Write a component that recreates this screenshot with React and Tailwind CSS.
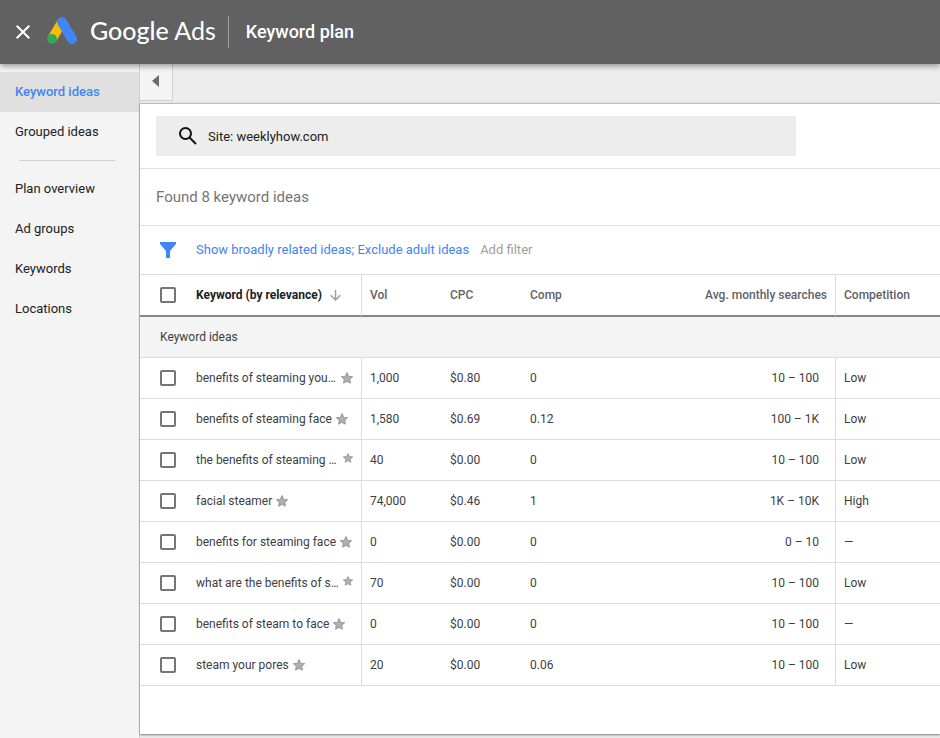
import clsx from 'clsx'

const primaryLinks = ['Keyword ideas', 'Grouped ideas']
const planLinks = ['Plan overview', 'Ad groups', 'Keywords', 'Locations']

const keywords = [
  { keyword: 'benefits of steaming you…', star: 'large', clipped: true, vol: '1,000', cpc: '$0.80', comp: '0', searches: '10 – 100', competition: 'Low' },
  { keyword: 'benefits of steaming face', star: 'large', vol: '1,580', cpc: '$0.69', comp: '0.12', searches: '100 – 1K', competition: 'Low' },
  { keyword: 'the benefits of steaming …', star: 'small', clipped: true, vol: '40', cpc: '$0.00', comp: '0', searches: '10 – 100', competition: 'Low' },
  { keyword: 'facial steamer', star: 'large', vol: '74,000', cpc: '$0.46', comp: '1', searches: '1K – 10K', competition: 'High' },
  { keyword: 'benefits for steaming face', star: 'large', vol: '0', cpc: '$0.00', comp: '0', searches: '0 – 10', competition: '—' },
  { keyword: 'what are the benefits of s…', star: 'small', clipped: true, vol: '70', cpc: '$0.00', comp: '0', searches: '10 – 100', competition: 'Low' },
  { keyword: 'benefits of steam to face', star: 'large', vol: '0', cpc: '$0.00', comp: '0', searches: '10 – 100', competition: '—' },
  { keyword: 'steam your pores', star: 'large', vol: '20', cpc: '$0.00', comp: '0.06', searches: '10 – 100', competition: 'Low' },
]

function AdsLogo() {
  return (
    <svg viewBox="0 0 30 27" className="mb-[3px] h-[27px] w-[30px]" aria-hidden="true">
      <path d="M15 5 5 22" stroke="#fbbc04" strokeWidth="9.500" />
      <path d="M15 5 25 22" stroke="#4285f4" strokeWidth="10" strokeLinecap="round" />
      <circle cx="5" cy="22" r="5" fill="#34a853" />
    </svg>
  )
}

function Star({ size }) {
  return (
    <svg
      viewBox="0 0 24 24"
      className={clsx('shrink-0', size === 'small' ? 'mb-1 size-[10px]' : 'size-3')}
      aria-hidden="true"
    >
      <path
        d="M12 1.500l3 7 7.800.8-5.700 5.200 1.600 7.500-6.700-3.700-6.700 3.700 1.600-7.500-5.700-5.200 7.800-.8z"
        fill="#b0b0b0"
        stroke="#a0a0a0"
        strokeWidth="2.500"
        strokeLinejoin="round"
      />
    </svg>
  )
}

function Checkbox({ label }) {
  return (
    <input
      type="checkbox"
      aria-label={label}
      className="block size-4 appearance-none rounded-xs border-2 border-[#757575] bg-white checked:bg-[#4285f4]"
    />
  )
}

function NavLink({ label, active }) {
  return (
    <a
      href="#"
      className={clsx(
        'flex h-10 items-center pl-[15px] text-[13px]',
        active ? 'bg-[#e0e0e0] font-medium text-[#4285f4]' : 'text-[#212121]'
      )}
    >
      {label}
    </a>
  )
}

function Header() {
  return (
    <header className="relative z-10 flex h-16 items-center bg-[#616161] pl-[15px] text-white shadow-[0_2px_6px_rgba(0,0,0,0.4)]">
      <button type="button" aria-label="Close" className="flex size-4 items-center justify-center">
        <svg viewBox="0 0 14 14" className="size-[14px]" fill="none" stroke="currentColor" strokeWidth="2">
          <path d="M0.700 0.700 13.300 13.300M13.300 0.700 0.700 13.300" />
        </svg>
      </button>
      <div className="ml-4 flex items-center">
        <AdsLogo />
        <span className="ml-[13px] pb-1 font-['Lato'] text-[25px] leading-8">
          <span className="font-medium">Google</span> Ads
        </span>
      </div>
      <h1 className="ml-3 flex h-8 items-center border-l border-[#9e9e9e] pl-[17px] text-lg font-medium">
        Keyword plan
      </h1>
    </header>
  )
}

function Sidebar() {
  return (
    <nav className="w-[140px] shrink-0 border-r border-[#d0d0d0] bg-[#f4f4f4] pt-2">
      {primaryLinks.map((label) => (
        <NavLink key={label} label={label} active={label === 'Keyword ideas'} />
      ))}
      <hr className="my-2 mr-6 ml-[19px] border-[#d0d0d0]" />
      {planLinks.map((label) => (
        <NavLink key={label} label={label} />
      ))}
    </nav>
  )
}

function KeywordTable() {
  const head = 'h-[42px] border-b-2 border-[#80868b] pl-2 text-left font-medium text-[#5f6368]'
  const cell = 'h-[41px] border-b border-[#dadce0] pl-2'

  return (
    <table className="w-full table-fixed border-separate border-spacing-0 text-xs text-[#3c4043]">
      <colgroup>
        <col className="w-12" />
        <col className="w-[174px]" />
        <col className="w-20" />
        <col className="w-20" />
        <col className="w-20" />
        <col />
        <col className="w-[104px]" />
      </colgroup>
      <thead>
        <tr>
          <th className="h-[42px] border-b-2 border-[#80868b] pl-5">
            <Checkbox label="Select all keywords" />
          </th>
          <th className="h-[42px] border-r border-b-2 border-r-[#dadce0] border-b-[#80868b] pl-2 text-left">
            <button type="button" className="flex items-center gap-2 whitespace-nowrap font-bold text-[#202124]">
              Keyword (by relevance)
              <svg viewBox="0 0 11 11" className="size-[11px]" fill="none" stroke="#9e9e9e" strokeWidth="1.500" aria-hidden="true">
                <path d="M5.500 0V10M0.700 5.200 5.500 10 10.300 5.200" />
              </svg>
            </button>
          </th>
          <th className={head}>Vol</th>
          <th className={head}>CPC</th>
          <th className={head}>Comp</th>
          <th className="h-[42px] border-r border-b-2 border-r-[#dadce0] border-b-[#80868b] pr-2 text-right font-medium text-[#5f6368]">
            Avg. monthly searches
          </th>
          <th className={head}>Competition</th>
        </tr>
      </thead>
      <tbody>
        <tr>
          <td colSpan={7} className="h-[41px] border-b border-[#dadce0] bg-[#f4f4f4] pl-5">
            Keyword ideas
          </td>
        </tr>
        {keywords.map((row) => (
          <tr key={row.keyword}>
            <td className="h-[41px] border-b border-[#dadce0] pl-5">
              <Checkbox label={row.keyword} />
            </td>
            <td className="h-[41px] border-r border-b border-[#dadce0] pr-2 pl-2">
              <div className={clsx('flex items-center gap-1 whitespace-nowrap', row.clipped && 'justify-between')}>
                <span>{row.keyword}</span>
                <Star size={row.star} />
              </div>
            </td>
            <td className={cell}>{row.vol}</td>
            <td className={cell}>{row.cpc}</td>
            <td className={cell}>{row.comp}</td>
            <td className="h-[41px] border-r border-b border-[#dadce0] pr-4 text-right">{row.searches}</td>
            <td className={cell}>{row.competition}</td>
          </tr>
        ))}
      </tbody>
    </table>
  )
}

export default function App() {
  return (
    <div className="flex min-h-screen flex-col bg-[#ededed] font-['Roboto',sans-serif]">
      <Header />
      <div className="flex flex-1">
        <Sidebar />
        <main className="flex min-w-0 flex-1 flex-col pb-1">
          <div className="h-[39px]">
            <button
              type="button"
              aria-label="Collapse menu"
              className="flex h-[37px] w-[33px] items-center justify-center border-r border-b border-[#d0d0d0] bg-[#f4f4f4] pr-[2px] pb-[2px]"
            >
              <svg viewBox="0 0 7 12" className="h-3 w-[7px]" fill="#6b6b6b">
                <path d="M7 0v12L0 6z" />
              </svg>
            </button>
          </div>

          <div className="flex-1 border-t border-[#bdbdbd] bg-white shadow-[0_1px_2px_rgba(0,0,0,0.5)]">
            <div className="border-b border-[#e0e0e0] px-4 py-3">
              <label className="flex h-10 w-5/6 items-center gap-[11px] bg-[#ededed] pl-[23px]">
                <svg viewBox="0 0 18 18" className="size-[18px] shrink-0" fill="none" stroke="#111" strokeWidth="2" aria-hidden="true">
                  <circle cx="6.500" cy="6.500" r="5.500" />
                  <path d="M10.500 10.500 17 17" />
                </svg>
                <input
                  type="text"
                  aria-label="Search site"
                  defaultValue="Site: weeklyhow.com"
                  className="min-w-0 flex-1 pt-px text-[13px] text-[#212121] outline-none"
                />
              </label>
            </div>

            <h2 className="flex h-[57px] items-center border-b border-[#e0e0e0] pl-4 text-[15px] text-[#757575]">
              Found 8 keyword ideas
            </h2>

            <div className="flex h-[49px] items-center border-b border-[#dadce0] pl-5 text-[13px]">
              <svg viewBox="0 0 16 16" className="size-4" fill="#4285f4" aria-hidden="true">
                <path d="M0 0h16v2l-6 7v7H6V9L0 2z" />
              </svg>
              <button type="button" className="ml-5 text-[#4285f4]">
                Show broadly related ideas; Exclude adult ideas
              </button>
              <button type="button" className="ml-[11px] text-[#9e9e9e]">
                Add filter
              </button>
            </div>

            <KeywordTable />
          </div>
        </main>
      </div>
    </div>
  )
}
